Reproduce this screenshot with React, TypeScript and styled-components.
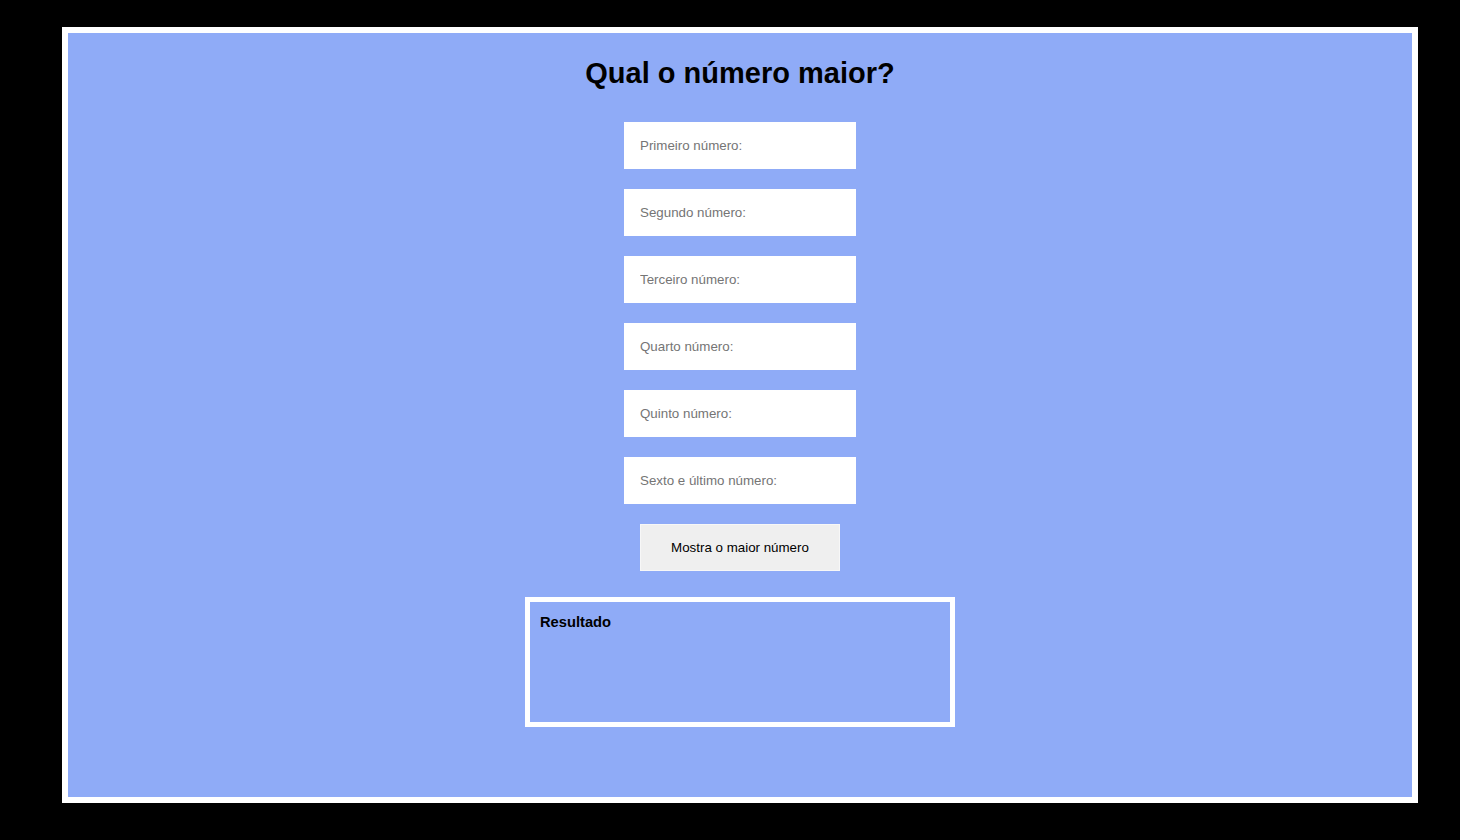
import React from "react";
import styled, { createGlobalStyle } from "styled-components";

const Global = createGlobalStyle`
  html, body { margin: 0; padding: 0; background: #000; }
  body { font-family: "Liberation Sans", Arial, sans-serif; }
  * { box-sizing: border-box; }
`;

const Page = styled.div`
  padding: 27px 42px 37px 62px;
  background: #000;
  min-height: 840px;
`;

const Frame = styled.main`
  width: 1356px;
  height: 776px;
  border: 6px solid #fff;
  background: #8fabf7;
  display: flex;
  flex-direction: column;
  align-items: center;
  padding-top: 24px;
`;

const Title = styled.h1`
  margin: 0 0 32px;
  font-family: "Liberation Sans", Arial, sans-serif;
  font-weight: 700;
  font-size: 29px;
  line-height: 33px;
  color: #000;
`;

const Form = styled.div`
  display: flex;
  flex-direction: column;
  align-items: center;
  gap: 20px;
`;

const NumberInput = styled.input`
  width: 232px;
  height: 47px;
  border: none;
  outline: none;
  background: #fff;
  padding: 0 16px;
  font-family: "Liberation Sans", Arial, sans-serif;
  font-size: 13.333px;
  color: #000;
  &::placeholder { color: #757575; }
`;

const Button = styled.button`
  width: 200px;
  height: 47px;
  background: #efefef;
  border: 1px solid #f7f7f7;
  font-family: "Liberation Sans", Arial, sans-serif;
  font-size: 13.333px;
  color: #000;
  cursor: pointer;
`;

const ResultBox = styled.section`
  margin-top: 26px;
  width: 430px;
  height: 130px;
  border: 5px solid #fff;
  padding: 12px 10px;
`;

const ResultTitle = styled.div`
  font-family: "Liberation Sans", Arial, sans-serif;
  font-weight: 700;
  font-size: 14.7px;
  line-height: 17px;
  color: #000;
`;

const fields = [
  "Primeiro número:",
  "Segundo número:",
  "Terceiro número:",
  "Quarto número:",
  "Quinto número:",
  "Sexto e último número:",
];

export default function App() {
  return (
    <>
      <Global />
      <Page>
        <Frame>
          <Title>Qual o número maior?</Title>
          <Form>
            {fields.map((f) => (
              <NumberInput key={f} type="number" placeholder={f} />
            ))}
            <Button type="button">Mostra o maior número</Button>
          </Form>
          <ResultBox>
            <ResultTitle>Resultado</ResultTitle>
          </ResultBox>
        </Frame>
      </Page>
    </>
  );
}
